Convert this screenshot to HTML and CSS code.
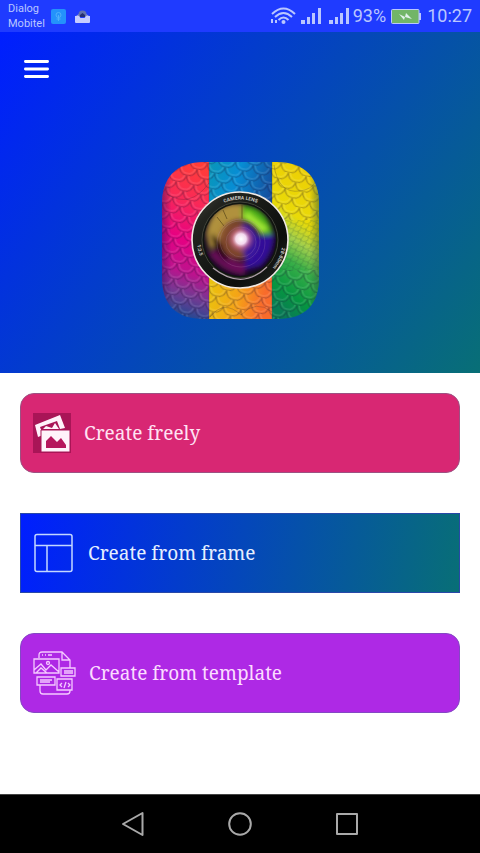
FILE: index.html
```html
<!DOCTYPE html>
<html lang="en">
<head>
  <meta charset="UTF-8">
  <meta name="viewport" content="width=device-width, initial-scale=1">
  <title>Photo Collage Maker</title>
  <link rel="stylesheet" href="styles.css">
</head>
<body>
<div class="status-bar">
  <div class="carriers">
    <span>Dialog</span>
    <span>Mobitel</span>
  </div>
  <svg class="note-icon" width="15" height="15" viewBox="0 0 15 15">
    <rect width="15" height="15" rx="2" fill="#2492fb"/>
    <circle cx="7.500" cy="6" r="2.500" fill="none" stroke="#4fb0fb"/>
    <path d="M7.500 6v6M5.500 10h4" stroke="#4fb0fb"/>
  </svg>
  <svg class="tray-icon" width="15" height="15" viewBox="0 0 15 15">
    <path d="M1 7l3-2a4 4 0 0 1 7 0l3 2z" fill="#9aa5e2"/>
    <path d="M3.500 8V5.500a4 4 0 0 1 8 0V8z" fill="#6272ad"/>
    <path d="M5 8V6l2.500-2L10 6v2z" fill="#252f70"/>
    <path d="M0 7h4l1.500 2h4L11 7h4v6a1 1 0 0 1-1 1H1a1 1 0 0 1-1-1z" fill="#c6cdff"/>
  </svg>

  <div class="indicators">
    <svg width="25" height="18" viewBox="0 0 25 18">
      <g fill="none" stroke="#bac7ff" stroke-width="2">
        <path d="M1 7q11.500-11 23 0"/>
        <path d="M4 10q8.500-8 17 0"/>
        <path d="M7.500 13q5-5 10 0"/>
      </g>
      <circle cx="12.500" cy="15" r="2" fill="#bac7ff"/>
      <path d="M1 12v4M5 13v3" stroke="#bac7ff" stroke-width="2"/>
    </svg>
    <svg class="signal" width="20" height="16" viewBox="0 0 20 16" fill="#bac7ff">
      <path d="M0 12h4v4H0zM6 9h3v7H6zM11 5h3v11h-3zM17 0h3v16h-3z"/>
    </svg>
    <svg class="signal signal-second" width="20" height="16" viewBox="0 0 20 16" fill="#bac7ff">
      <path d="M0 12h4v4H0zM6 9h3v7H6zM11 5h3v11h-3zM17 0h3v16h-3z"/>
    </svg>
    <span class="percent">93%</span>
    <svg class="battery" width="30" height="15" viewBox="0 0 30 15">
      <path d="M28 4h2v7h-2z" fill="#bac7ff"/>
      <rect x="0.500" y="0.500" width="27.500" height="14" rx="1" fill="#72b568" stroke="#bac7ff"/>
      <path d="M8 5l6 3 1-4 6 6-7-2-1 3z" fill="#e0f1ea"/>
    </svg>
    <span class="clock">10:27</span>
  </div>
</div>

<header class="hero">
  <button class="menu" type="button" aria-label="Menu">
    <svg width="25" height="18" viewBox="0 0 25 18" stroke="#fff" stroke-width="2.800" stroke-linecap="round">
      <path d="M1.400 1.500h22.200M1.400 9h22.200M1.400 16.500h22.200"/>
    </svg>
  </button>

  <svg class="logo" width="157" height="157" viewBox="0 0 157 157">
    <defs>
      <clipPath id="tile"><path d="M42 0H115C143 0 157 16 157 42V115C157 143 143 157 115 157H42C14 157 0 143 0 115V42C0 16 14 0 42 0z"/></clipPath>
      <linearGradient id="left" x1="0.600" y1="0" x2="0.500" y2="1">
        <stop offset="0" stop-color="#ff3d38"/>
        <stop offset="0.250" stop-color="#f92858"/>
        <stop offset="0.500" stop-color="#e60082"/>
        <stop offset="0.700" stop-color="#bd128d"/>
        <stop offset="0.850" stop-color="#713a92"/>
        <stop offset="1" stop-color="#1e4a91"/>
      </linearGradient>
      <linearGradient id="middle" x1="0" y1="0" x2="1" y2="0.400">
        <stop offset="0" stop-color="#0997b8"/>
        <stop offset="0.450" stop-color="#078dd4"/>
        <stop offset="1" stop-color="#154c9c"/>
      </linearGradient>
      <linearGradient id="bottom" x1="0" y1="0" x2="1" y2="0.300">
        <stop offset="0" stop-color="#e6ce0b"/>
        <stop offset="0.600" stop-color="#f4a516"/>
        <stop offset="1" stop-color="#f96b2b"/>
      </linearGradient>
      <linearGradient id="right" x1="0.600" y1="0" x2="0.400" y2="1">
        <stop offset="0" stop-color="#edce05"/>
        <stop offset="0.350" stop-color="#e9da08"/>
        <stop offset="0.500" stop-color="#a2cf4c"/>
        <stop offset="0.650" stop-color="#38ae48"/>
        <stop offset="0.850" stop-color="#069640"/>
        <stop offset="1" stop-color="#087b55"/>
      </linearGradient>
      <pattern id="scales" width="18" height="16" patternUnits="userSpaceOnUse" patternTransform="rotate(12)">
        <g fill="none">
          <path d="M0 0q1 8 9 8t9-8M-9 8q1 8 9 8t9-8M9 8q1 8 9 8t9-8" stroke="#20183c" stroke-opacity="0.300" stroke-width="1.200"/>
          <path d="M2 0q1 6 7 6t7-6M-7 8q1 6 7 6t7-6M11 8q1 6 7 6t7-6" stroke="#fff" stroke-opacity="0.120" stroke-width="1.500"/>
        </g>
      </pattern>
      <pattern id="small-scales" width="8" height="8" patternUnits="userSpaceOnUse" patternTransform="rotate(-18)">
        <path d="M0 0q0 4 4 4t4-4M-4 4q0 4 4 4t4-4M4 4q0 4 4 4t4-4" fill="none" stroke="#184a34" stroke-opacity="0.250" stroke-width="0.800"/>
      </pattern>
      <linearGradient id="edge">
        <stop offset="0" stop-color="#301060" stop-opacity="0.500"/>
        <stop offset="0.060" stop-color="#301060" stop-opacity="0"/>
        <stop offset="0.940" stop-color="#205040" stop-opacity="0"/>
        <stop offset="1" stop-color="#205040" stop-opacity="0.500"/>
      </linearGradient>

      <linearGradient id="barrel" x1="0" y1="0" x2="1" y2="1">
        <stop offset="0" stop-color="#44453e"/>
        <stop offset="0.200" stop-color="#22241f"/>
        <stop offset="0.700" stop-color="#0c0e0c"/>
        <stop offset="1" stop-color="#272b26"/>
      </linearGradient>
      <radialGradient id="glass">
        <stop offset="0" stop-color="#6a3350"/>
        <stop offset="0.500" stop-color="#321329"/>
        <stop offset="1" stop-color="#130a1e"/>
      </radialGradient>
      <radialGradient id="glow">
        <stop offset="0" stop-color="#fff"/>
        <stop offset="0.350" stop-color="#fce1f4" stop-opacity="0.950"/>
        <stop offset="0.600" stop-color="#d87a9c" stop-opacity="0.600"/>
        <stop offset="1" stop-color="#8a4070" stop-opacity="0"/>
      </radialGradient>
      <clipPath id="glass-clip"><circle cx="78" cy="78" r="36"/></clipPath>
      <filter id="soft" x="-30%" y="-30%" width="160%" height="160%"><feGaussianBlur stdDeviation="2.500"/></filter>
      <path id="ring-top" d="M37.500 78.500a41 41 0 0 1 82 0"/>
      <path id="ring-right" d="M120.500 80a42.500 42.500 0 0 1-25 37"/>
      <path id="ring-left" d="M35 80a43.500 43.500 0 0 0 15 31"/>
    </defs>

    <g clip-path="url(#tile)">
      <path d="M0 0h47v157H0z" fill="url(#left)"/>
      <path d="M47 0h63v79H47z" fill="url(#middle)"/>
      <path d="M47 79h63v78H47z" fill="url(#bottom)"/>
      <path d="M110 0h47v157h-47z" fill="url(#right)"/>
      <path d="M0 0h110v157H0zM110 0h47v58h-47zM110 108h47v49h-47z" fill="url(#scales)"/>
      <path d="M110 58h47v50h-47z" fill="url(#small-scales)"/>
      <path d="M5 32Q28 47 47 21M112 3q4 29 26 26t16-28M48 155q14-18 31-2 15-16 31-3" fill="none" stroke="#352838" stroke-opacity="0.250"/>
      <path d="M0 0h157v157H0z" fill="url(#edge)"/>
      <path d="M47 0v157M110 0v157" stroke="#404040" stroke-opacity="0.300"/>
    </g>

    <circle cx="78" cy="78" r="48" fill="url(#barrel)" stroke="#f0e9e5" stroke-width="1.600"/>
    <circle cx="78" cy="78" r="38" fill="#111510" stroke="#4a4d43" stroke-width="0.800"/>
    <circle cx="78" cy="78" r="36" fill="url(#glass)"/>
    <g clip-path="url(#glass-clip)">
      <g filter="url(#soft)">
        <path d="M44 72q6-34 37-30v17q-16-2-20 17l-13 12z" fill="#b0913c"/>
        <path d="M80 43q26 2 31 30l-14-1q-5-11-17-13z" fill="#49ae17"/>
        <path d="M85 49l22 18-8 4-18-16z" fill="#a2e836"/>
        <path d="M83 76l29-4q1 17-13 32l-20 5q10-18 4-33z" fill="#301098"/>
        <path d="M46 91q15 21 37 22v-12q-15-3-22-17z" fill="#691058"/>
        <path d="M49 71q3 23 18 29l-3-16z" fill="#180410"/>
      </g>
      <path d="M55 55l7 9M61 48l4 9M80 43v14" stroke="#584618" stroke-opacity="0.700"/>
      <g filter="url(#soft)">
        <circle cx="76" cy="78" r="19" fill="#8e532c" fill-opacity="0.800"/>
        <path d="M81 61a20 20 0 0 1 4 38q-9-18-4-38z" fill="#3b199c"/>
      </g>
      <g fill="none" stroke="#ca9ac0" stroke-opacity="0.250" stroke-width="0.800">
        <circle cx="78" cy="79" r="20"/>
        <circle cx="79" cy="80" r="15"/>
        <circle cx="79" cy="81" r="24"/>
      </g>
    </g>
    <circle cx="79" cy="77" r="15" fill="url(#glow)"/>
    <path d="M51 106q29 23 54-1" fill="none" stroke="#b1a1ac" stroke-width="1.200"/>
    <g class="lens-text">
      <text><textPath href="#ring-top" startOffset="37%">CAMERA LENS</textPath></text>
      <text><textPath href="#ring-right" startOffset="12%">28-80mm</textPath></text>
      <text><textPath href="#ring-left" startOffset="8%">1:3.5</textPath></text>
    </g>
  </svg>
</header>

<main class="actions">
  <button class="action freely" type="button">
    <svg width="38" height="40" viewBox="0 0 38 40">
      <path d="M0 0h38v40H0z" fill="#a91557"/>
      <path d="M2 12L27 2l5 13-5 1-3-8L7 14l3 8-5 2z" fill="#fff3fb"/>
      <path d="M10 16l3-3 6 2 3-5 4 6z" fill="#fff3fb"/>
      <path d="M8 17h29v22H8z" fill="#fff3fb" stroke="#a91557"/>
      <path d="M13 35v-7l5-5 6 6 4-4 5 7v3z" fill="#b6165d"/>
    </svg>
    <span>Create freely</span>
  </button>

  <button class="action frame" type="button">
    <svg width="42" height="40" viewBox="0 0 42 40" fill="none" stroke="#c3d7ff" stroke-width="1.500">
      <rect x="2" y="1.500" width="37" height="37" rx="2"/>
      <path d="M2 12.500h37M14 12.500v26"/>
    </svg>
    <span>Create from frame</span>
  </button>

  <button class="action template" type="button">
    <svg width="43" height="44" viewBox="0 0 43 44" fill="none" stroke="#f5caff" stroke-width="1.300">
      <path d="M6 7V4q0-3 3-3h20l8 8v8M29 1v8h8M7 34v6q0 3 3 3h24q3 0 3-3v-1M9 4h1M12 4h1M15 4h4"/>
      <path d="M1 8h25v14H1zM1 19l7-6 5 6 5-5 8 7M3 22l5-5 6 5"/>
      <circle cx="15" cy="12" r="1.500"/>
      <path d="M28 17h14v8H28zM31 20h9M31 22h9M4 26h18v8H4zM7 29h12M7 31h10M24 28h15v11H24z"/>
      <path d="M29 32l-2 2 2 2M35 32l2 2-2 2M33 31l-2 6"/>
    </svg>
    <span>Create from template</span>
  </button>
</main>

<nav class="nav-bar">
  <button type="button" aria-label="Back">
    <svg width="24" height="26" viewBox="0 0 24 26"><path d="M21.500 2v22L2 13z"/></svg>
  </button>
  <button type="button" aria-label="Home">
    <svg width="24" height="26" viewBox="0 0 24 26"><circle cx="12" cy="13" r="10.800"/></svg>
  </button>
  <button type="button" aria-label="Recent apps">
    <svg width="24" height="26" viewBox="0 0 24 26"><path d="M2 3h20v20H2z"/></svg>
  </button>
</nav>
</body>
</html>
```
FILE: styles.css
```css
* {
  box-sizing: border-box;
}

body {
  display: flex;
  flex-direction: column;
  min-height: 100vh;
  margin: 0;
  background: #ffffff;
  font-family: Roboto, sans-serif;
}

button {
  margin: 0;
  padding: 0;
  border: 0;
  background: none;
  font: inherit;
  cursor: pointer;
}

svg {
  display: block;
  flex-shrink: 0;
}

.status-bar {
  display: flex;
  align-items: center;
  height: 32px;
  padding: 0 8px;
  background: #1f3bff;
  color: #bac7ff;
}

.carriers {
  display: flex;
  flex-direction: column;
  width: 43px;
  font-size: 11px;
  line-height: 15px;
}

.tray-icon {
  margin-left: 9px;
}

.indicators {
  display: flex;
  align-items: center;
  margin-left: auto;
  font-size: 18px;
  line-height: 32px;
}

.signal {
  margin-left: 5px;
}

.signal-second {
  margin-left: 8px;
}

.percent {
  margin-left: 4px;
}

.battery {
  margin: 0 6px 0 5px;
}

.hero {
  display: flex;
  flex-direction: column;
  padding: 20px 16px 54px;
  background: linear-gradient(125deg, #001eff, #086f76);
}

.menu {
  align-self: flex-start;
  padding: 8px;
}

.logo {
  align-self: center;
  margin-top: 76px;
}

.lens-text {
  fill: #c9c9c4;
  font-family: Roboto, sans-serif;
  font-size: 5px;
  font-weight: 700;
}

.actions {
  display: flex;
  flex: 1;
  flex-direction: column;
  gap: 40px;
  padding: 20px;
}

.action {
  display: flex;
  align-items: center;
  gap: 13px;
  height: 80px;
  padding: 0 12px;
  border: 1px solid #7f5f9f;
  border-radius: 14px;
  color: #ffffff;
  font-family: "Noto Serif", "Droid Serif", "DejaVu Serif Condensed", "DejaVu Serif", serif;
  font-size: 19px;
  text-align: left;
}

.freely {
  border-color: #9c5182;
  background: #d82773;
  color: #ffe3f3;
}

.frame {
  border-color: #2848a8;
  border-radius: 0;
  background: linear-gradient(100deg, #001eff, #086f76) border-box;
  color: #e6efff;
}

.template {
  border-color: #8448c4;
  background: #ae29e5;
  color: #fbdcff;
}

.nav-bar {
  display: flex;
  align-items: center;
  justify-content: center;
  gap: 83px;
  height: 59px;
  border-top: 1px solid #444444;
  background: #000000;
}

.nav-bar svg {
  fill: none;
  stroke: #a9a9a9;
  stroke-width: 2;
  stroke-linejoin: round;
}
```
